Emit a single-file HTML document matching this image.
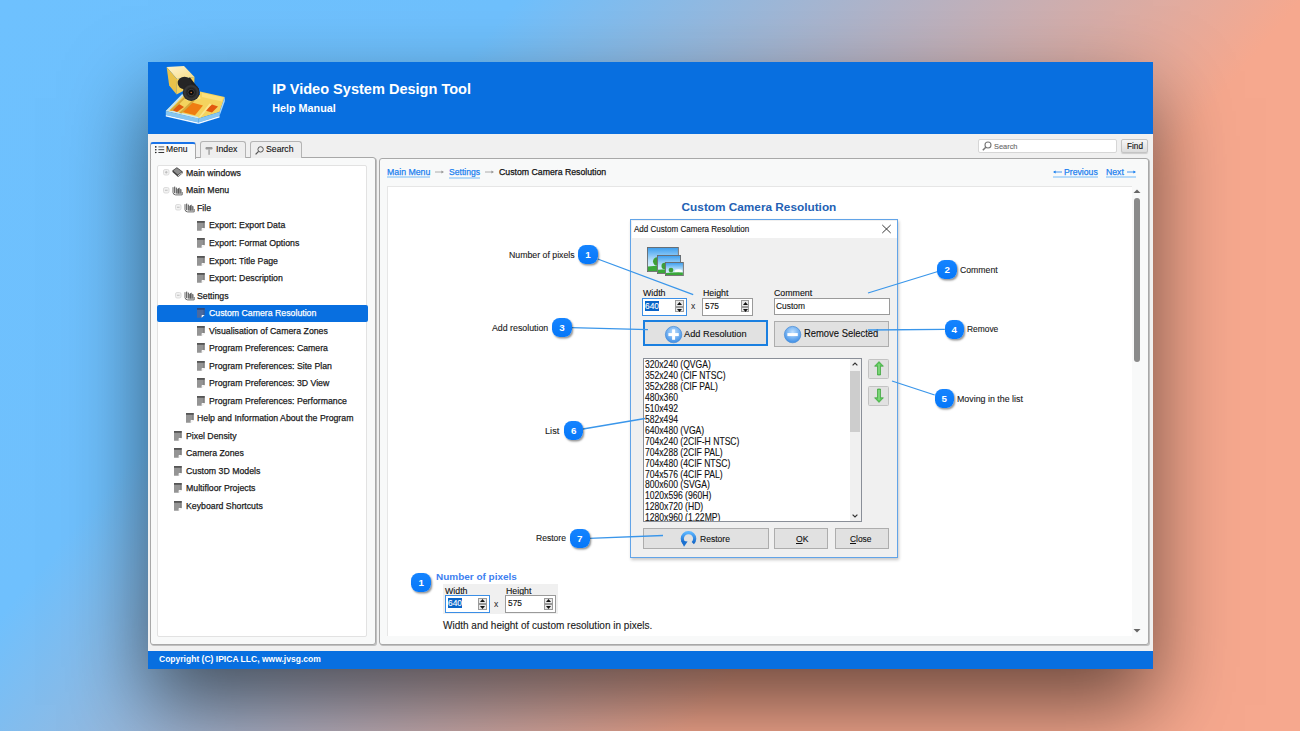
<!DOCTYPE html>
<html><head><meta charset="utf-8"><style>
*{box-sizing:border-box;margin:0;padding:0}
html,body{width:1300px;height:731px;overflow:hidden}
body{position:relative;font-family:"Liberation Sans",sans-serif;
 background:linear-gradient(130deg,#6ec1fe 0%,#6fc0fd 27%,#b3b3c6 47%,#f6a88e 68%,#f6a88e 100%);}
.a{position:absolute}
.t{white-space:nowrap;line-height:1}
svg{position:absolute;overflow:visible}
</style></head><body>
<div class="a" style="left:147.50px;top:62.00px;width:1005.00px;height:607.30px;background:#f0f0f0;box-shadow:0 36px 76px rgba(0,0,0,.56)"></div>
<div class="a" style="left:147.50px;top:62.00px;width:1005.00px;height:72.00px;background:#086fe0"></div>
<div class="a" style="left:147.50px;top:651.20px;width:1005.00px;height:18.00px;background:#086fe0"></div>
<svg style="left:160px;top:62px" width="70" height="64" viewBox="0 0 70 64">
<defs>
<linearGradient id="lg1" x1="0" y1="0" x2="1" y2="1"><stop offset="0" stop-color="#fff4cf"/><stop offset="1" stop-color="#f6dc86"/></linearGradient>
<radialGradient id="lens" cx=".5" cy=".5" r=".55"><stop offset="0" stop-color="#111"/><stop offset=".45" stop-color="#222"/><stop offset=".7" stop-color="#3a3a3a"/><stop offset="1" stop-color="#151515"/></radialGradient>
</defs>
<path d="M5.8 49 L21.9 32.5 L40 33 L40 29.5 L64.7 35 L59.5 50 L38.5 56.5 Z" fill="#f4d35e"/>
<path d="M5.8 49 L38.5 56.5 L38.5 60.5 L5.8 53 Z" fill="#86c6f2"/>
<path d="M5.8 53 L38.5 60.5 L38.5 62 L5.8 54.5 Z" fill="#f4faff"/>
<path d="M38.5 56.5 L59.5 50 L59.5 54 L38.5 60.5 Z" fill="#86c6f2"/>
<path d="M38.5 60.5 L59.5 54 L59.5 55.5 L38.5 62 Z" fill="#f4faff"/>
<path d="M59.5 50 L64.7 35 L64.9 39 L59.5 54 Z" fill="#a6d8fb"/>
<path d="M5.8 49 L21.9 32.5 L23.8 33 L8.3 49.3 Z" fill="#bfe4fc"/>
<path d="M8.3 49.3 L38.5 56.5 L38.5 55 L9.8 48.3 Z" fill="#c9e9fd"/>
<path d="M22 50 L32 40.5 L43 43.5 L35 53.3 Z" fill="#ef7d12"/>
<path d="M11 47.8 L19 42 L24 45 L17 50 Z" fill="#e05c10"/>
<path d="M45 48.5 L52 42.5 L58 44.5 L52 50.5 Z" fill="#e2580e"/>
<path d="M9.5 48.5 L24 35 L26 35.6 L12 49 Z" fill="#d6a93a"/>
<path d="M19 51 L32.5 38.2 L34.5 39 L21.5 51.6 Z" fill="#d6a93a"/>
<path d="M38.5 55.5 L49.5 41.5 L51.5 42.2 L40.5 55.5 Z" fill="#fae68e"/>
<path d="M42 31 L63 35.5 L62 39.5 L42 35 Z" fill="#fbe07a"/>
<path d="M26 36 L40 34 L40.5 37 L27 39 Z" fill="#fbe48a"/>
<path d="M6.6 5 L24 3.9 L34.5 15 L17 17 Z" fill="url(#lg1)"/>
<path d="M6.6 5 L17 17 L16.6 32.4 L9.2 23.4 Z" fill="#e9c24a"/>
<path d="M17 17 L34.5 15 L34.2 23 L16.6 32.4 Z" fill="#f3d15c"/>
<path d="M19.5 19.5 L30 15.5 L39 27 L28 36 Z" fill="#1e1e1e"/>
<ellipse cx="24.5" cy="21" rx="6.8" ry="6.2" fill="#252525"/>
<ellipse cx="31.2" cy="30.5" rx="8.4" ry="8.4" fill="url(#lens)"/>
<circle cx="31.2" cy="30.5" r="3.2" fill="#0c0c0c" stroke="#4a4a4a" stroke-width=".7"/>
<circle cx="31.2" cy="30.5" r=".8" fill="#d07030"/>
</svg>
<div class="a t" style="left:272.20px;top:82.47px;font-size:14.560px;color:#fff;font-weight:bold;">IP Video System Design Tool</div>
<div class="a t" style="left:272.20px;top:103.06px;font-size:10.800px;color:#fff;font-weight:bold;">Help Manual</div>
<div class="a t" style="left:158.50px;top:655.26px;font-size:9.383px;color:#fff;font-weight:bold;transform:scaleX(0.9091);transform-origin:0 0;">Copyright (C) IPICA LLC, www.jvsg.com</div>
<div class="a" style="left:978.30px;top:138.80px;width:138.30px;height:14.20px;background:#fff;border:1px solid #d6d6d6;border-radius:2px"></div>
<svg style="left:982px;top:141px" width="10" height="10" viewBox="0 0 10 10"><circle cx="6" cy="4" r="3" fill="none" stroke="#777" stroke-width="1.1"/><line x1="3.8" y1="6.2" x2="0.8" y2="9.2" stroke="#777" stroke-width="1.5"/></svg>
<div class="a t" style="left:994.20px;top:142.82px;font-size:8.014px;color:#6a6a6a;font-weight:normal;transform:scaleX(0.9259);transform-origin:0 0;-webkit-text-stroke:.12px currentColor;">Search</div>
<div class="a" style="left:1120.60px;top:138.80px;width:27.60px;height:14.20px;background:linear-gradient(#f6f6f6,#dcdcdc);border:1px solid #c4c4c4;border-radius:2px;box-shadow:0 1px 1px rgba(0,0,0,.15)"></div>
<div class="a t" style="left:1127.00px;top:142.29px;font-size:8.878px;color:#111;font-weight:normal;transform:scaleX(0.9259);transform-origin:0 0;-webkit-text-stroke:.12px currentColor;">Find</div>
<div class="a" style="left:149.50px;top:157.40px;width:226.70px;height:487.20px;background:#f8f9f9;border:1px solid #a8a8a8;border-radius:3px;box-shadow:1px 1px 0 #c0c0c0"></div>
<div class="a" style="left:378.50px;top:157.60px;width:770.80px;height:487.40px;background:#f8f9f9;border:1px solid #a8a8a8;border-radius:3px;box-shadow:1px 1px 0 #c0c0c0"></div>
<div class="a" style="left:199.80px;top:141.20px;width:46.70px;height:16.40px;background:#eeeeee;border:1px solid #b4b4b4;border-bottom:none;border-radius:3px 3px 0 0"></div>
<div class="a" style="left:249.70px;top:141.20px;width:52.70px;height:16.40px;background:#eeeeee;border:1px solid #b4b4b4;border-bottom:none;border-radius:3px 3px 0 0"></div>
<div class="a" style="left:149.50px;top:141.70px;width:46.90px;height:16.90px;background:#f8f9f9;border:1px solid #a8a8a8;border-top:2px solid #1a73e8;border-bottom:none;border-radius:3px 3px 0 0"></div>
<svg style="left:154.6px;top:145.9px" width="10" height="8" viewBox="0 0 10 8"><g fill="#111"><circle cx=".8" cy=".9" r=".8"/><circle cx=".8" cy="3.7" r=".8"/><circle cx=".8" cy="6.5" r=".8"/><rect x="3.4" y=".45" width="5.8" height=".9" fill="#555"/><rect x="3.4" y="3.25" width="5.8" height=".9" fill="#333"/><rect x="3.4" y="6.05" width="5.8" height=".9" fill="#222"/></g></svg>
<div class="a t" style="left:166.00px;top:144.38px;font-size:9.707px;color:#111;font-weight:normal;transform:scaleX(0.8850);transform-origin:0 0;-webkit-text-stroke:.12px currentColor;">Menu</div>
<svg style="left:204.6px;top:146px" width="9" height="9" viewBox="0 0 9 9"><path d="M1 1 H7 Q8.6 2.3 7 3.6 H1 Q-.4 2.3 1 1 Z" fill="#9a9a9a"/><rect x="3.5" y="3.6" width="1.1" height="5.2" fill="#8a8a8a"/></svg>
<div class="a t" style="left:216.00px;top:143.93px;font-size:9.887px;color:#111;font-weight:normal;transform:scaleX(0.8850);transform-origin:0 0;-webkit-text-stroke:.12px currentColor;">Index</div>
<svg style="left:254.8px;top:145.5px" width="9" height="9" viewBox="0 0 9 9"><circle cx="5.6" cy="3.4" r="2.7" fill="none" stroke="#555" stroke-width="1"/><line x1="3.6" y1="5.4" x2="0.6" y2="8.4" stroke="#555" stroke-width="1.3"/></svg>
<div class="a t" style="left:265.60px;top:143.97px;font-size:9.842px;color:#111;font-weight:normal;transform:scaleX(0.8850);transform-origin:0 0;-webkit-text-stroke:.12px currentColor;">Search</div>
<div class="a" style="left:157.20px;top:165.40px;width:210.10px;height:471.40px;background:#fff;border:1px solid #e2e2e2;border-radius:2px"></div>
<svg style="left:172.30px;top:167.30px" width="11.5" height="10.5" viewBox="0 0 11.5 10.5"><path d="M.4 3.6 L4.9 .3 L10.6 4.6 L10.9 6.1 L6.1 9.9 L.5 4.9 Z" fill="#3e3e3e"/><path d="M1.2 3.7 L4.9 1 L9.7 4.7 L5.9 7.8 Z" fill="#8e8e8e"/><path d="M5.9 8.5 L10.1 5.2 L10.3 6 L6.1 9.2 Z" fill="#fff"/></svg>
<svg style="left:163.00px;top:169.30px" width="6.5" height="6.5" viewBox="0 0 6.5 6.5"><rect x=".5" y=".5" width="5.5" height="5.5" rx="1.5" fill="#f2f2f2" stroke="#d6d6d6" stroke-width=".8"/><path d="M1.9 3.25H4.6M3.25 1.9V4.6" stroke="#b8b8b8" stroke-width=".9"/></svg>
<div class="a t" style="left:185.60px;top:167.90px;font-size:9.450px;color:#1a1a1a;font-weight:normal;transform:scaleX(0.9259);transform-origin:0 0;-webkit-text-stroke:.25px currentColor;">Main windows</div>
<svg style="left:172.20px;top:185.62px" width="11" height="9.5" viewBox="0 0 11 9.5"><path d="M1 1.2 V6.6 Q1.2 8.8 3.6 8.9 H10.2 V6" fill="none" stroke="#6a6a6a" stroke-width="1"/><path d="M2.7 .6 V7.2 M4.3 1.6 V7.6" stroke="#4a4a4a" stroke-width="1"/><path d="M5.3 3 L7.6 1.6 V7.8 H5.3 Z" fill="#5a5a5a"/><path d="M7.6 2.6 L9.6 3.6 V7.8 H7.6 Z" fill="#7a7a7a"/></svg>
<svg style="left:163.00px;top:186.82px" width="6.5" height="6.5" viewBox="0 0 6.5 6.5"><rect x=".5" y=".5" width="5.5" height="5.5" rx="1.5" fill="#f2f2f2" stroke="#d6d6d6" stroke-width=".8"/><path d="M1.9 3.25H4.6" stroke="#b8b8b8" stroke-width=".9"/></svg>
<div class="a t" style="left:185.60px;top:185.42px;font-size:9.450px;color:#1a1a1a;font-weight:normal;transform:scaleX(0.9259);transform-origin:0 0;-webkit-text-stroke:.25px currentColor;">Main Menu</div>
<svg style="left:183.80px;top:203.14px" width="11" height="9.5" viewBox="0 0 11 9.5"><path d="M1 1.2 V6.6 Q1.2 8.8 3.6 8.9 H10.2 V6" fill="none" stroke="#6a6a6a" stroke-width="1"/><path d="M2.7 .6 V7.2 M4.3 1.6 V7.6" stroke="#4a4a4a" stroke-width="1"/><path d="M5.3 3 L7.6 1.6 V7.8 H5.3 Z" fill="#5a5a5a"/><path d="M7.6 2.6 L9.6 3.6 V7.8 H7.6 Z" fill="#7a7a7a"/></svg>
<svg style="left:174.60px;top:204.34px" width="6.5" height="6.5" viewBox="0 0 6.5 6.5"><rect x=".5" y=".5" width="5.5" height="5.5" rx="1.5" fill="#f2f2f2" stroke="#d6d6d6" stroke-width=".8"/><path d="M1.9 3.25H4.6" stroke="#b8b8b8" stroke-width=".9"/></svg>
<div class="a t" style="left:197.20px;top:202.94px;font-size:9.450px;color:#1a1a1a;font-weight:normal;transform:scaleX(0.9259);transform-origin:0 0;-webkit-text-stroke:.25px currentColor;">File</div>
<svg style="left:197.20px;top:220.66px" width="8" height="10" viewBox="0 0 8 10"><path d="M0 0 H7.6 V7 L4.6 9.8 H0 Z" fill="#949494"/><rect x="0" y="0" width="7.6" height="1.8" fill="#555555"/><rect x="6.6" y="0" width="1" height="7" fill="#555555" opacity=".6"/><path d="M7.6 7 L4.6 9.8 V7.6 Q4.8 7 5.4 7 Z" fill="#fff"/></svg>
<div class="a t" style="left:208.80px;top:220.46px;font-size:9.450px;color:#1a1a1a;font-weight:normal;transform:scaleX(0.9259);transform-origin:0 0;-webkit-text-stroke:.25px currentColor;">Export: Export Data</div>
<svg style="left:197.20px;top:238.18px" width="8" height="10" viewBox="0 0 8 10"><path d="M0 0 H7.6 V7 L4.6 9.8 H0 Z" fill="#949494"/><rect x="0" y="0" width="7.6" height="1.8" fill="#555555"/><rect x="6.6" y="0" width="1" height="7" fill="#555555" opacity=".6"/><path d="M7.6 7 L4.6 9.8 V7.6 Q4.8 7 5.4 7 Z" fill="#fff"/></svg>
<div class="a t" style="left:208.80px;top:237.98px;font-size:9.450px;color:#1a1a1a;font-weight:normal;transform:scaleX(0.9259);transform-origin:0 0;-webkit-text-stroke:.25px currentColor;">Export: Format Options</div>
<svg style="left:197.20px;top:255.70px" width="8" height="10" viewBox="0 0 8 10"><path d="M0 0 H7.6 V7 L4.6 9.8 H0 Z" fill="#949494"/><rect x="0" y="0" width="7.6" height="1.8" fill="#555555"/><rect x="6.6" y="0" width="1" height="7" fill="#555555" opacity=".6"/><path d="M7.6 7 L4.6 9.8 V7.6 Q4.8 7 5.4 7 Z" fill="#fff"/></svg>
<div class="a t" style="left:208.80px;top:255.50px;font-size:9.450px;color:#1a1a1a;font-weight:normal;transform:scaleX(0.9259);transform-origin:0 0;-webkit-text-stroke:.25px currentColor;">Export: Title Page</div>
<svg style="left:197.20px;top:273.22px" width="8" height="10" viewBox="0 0 8 10"><path d="M0 0 H7.6 V7 L4.6 9.8 H0 Z" fill="#949494"/><rect x="0" y="0" width="7.6" height="1.8" fill="#555555"/><rect x="6.6" y="0" width="1" height="7" fill="#555555" opacity=".6"/><path d="M7.6 7 L4.6 9.8 V7.6 Q4.8 7 5.4 7 Z" fill="#fff"/></svg>
<div class="a t" style="left:208.80px;top:273.02px;font-size:9.450px;color:#1a1a1a;font-weight:normal;transform:scaleX(0.9259);transform-origin:0 0;-webkit-text-stroke:.25px currentColor;">Export: Description</div>
<svg style="left:183.80px;top:290.74px" width="11" height="9.5" viewBox="0 0 11 9.5"><path d="M1 1.2 V6.6 Q1.2 8.8 3.6 8.9 H10.2 V6" fill="none" stroke="#6a6a6a" stroke-width="1"/><path d="M2.7 .6 V7.2 M4.3 1.6 V7.6" stroke="#4a4a4a" stroke-width="1"/><path d="M5.3 3 L7.6 1.6 V7.8 H5.3 Z" fill="#5a5a5a"/><path d="M7.6 2.6 L9.6 3.6 V7.8 H7.6 Z" fill="#7a7a7a"/></svg>
<svg style="left:174.60px;top:291.94px" width="6.5" height="6.5" viewBox="0 0 6.5 6.5"><rect x=".5" y=".5" width="5.5" height="5.5" rx="1.5" fill="#f2f2f2" stroke="#d6d6d6" stroke-width=".8"/><path d="M1.9 3.25H4.6" stroke="#b8b8b8" stroke-width=".9"/></svg>
<div class="a t" style="left:197.20px;top:290.54px;font-size:9.450px;color:#1a1a1a;font-weight:normal;transform:scaleX(0.9259);transform-origin:0 0;-webkit-text-stroke:.25px currentColor;">Settings</div>
<div class="a" style="left:157.40px;top:304.50px;width:210.40px;height:17.80px;background:#086fe0;border-radius:2px"></div>
<svg style="left:197.20px;top:308.26px" width="8" height="10" viewBox="0 0 8 10"><path d="M0 0 H7.6 V7 L4.6 9.8 H0 Z" fill="#4a6aa0"/><rect x="0" y="0" width="7.6" height="1.8" fill="#2c4a80"/><rect x="6.6" y="0" width="1" height="7" fill="#2c4a80" opacity=".6"/><path d="M7.6 7 L4.6 9.8 V7.6 Q4.8 7 5.4 7 Z" fill="#fff"/></svg>
<div class="a t" style="left:208.80px;top:308.06px;font-size:9.450px;color:#fff;font-weight:normal;transform:scaleX(0.9259);transform-origin:0 0;-webkit-text-stroke:.25px currentColor;">Custom Camera Resolution</div>
<svg style="left:197.20px;top:325.78px" width="8" height="10" viewBox="0 0 8 10"><path d="M0 0 H7.6 V7 L4.6 9.8 H0 Z" fill="#949494"/><rect x="0" y="0" width="7.6" height="1.8" fill="#555555"/><rect x="6.6" y="0" width="1" height="7" fill="#555555" opacity=".6"/><path d="M7.6 7 L4.6 9.8 V7.6 Q4.8 7 5.4 7 Z" fill="#fff"/></svg>
<div class="a t" style="left:208.80px;top:325.58px;font-size:9.450px;color:#1a1a1a;font-weight:normal;transform:scaleX(0.9259);transform-origin:0 0;-webkit-text-stroke:.25px currentColor;">Visualisation of Camera Zones</div>
<svg style="left:197.20px;top:343.30px" width="8" height="10" viewBox="0 0 8 10"><path d="M0 0 H7.6 V7 L4.6 9.8 H0 Z" fill="#949494"/><rect x="0" y="0" width="7.6" height="1.8" fill="#555555"/><rect x="6.6" y="0" width="1" height="7" fill="#555555" opacity=".6"/><path d="M7.6 7 L4.6 9.8 V7.6 Q4.8 7 5.4 7 Z" fill="#fff"/></svg>
<div class="a t" style="left:208.80px;top:343.10px;font-size:9.450px;color:#1a1a1a;font-weight:normal;transform:scaleX(0.9259);transform-origin:0 0;-webkit-text-stroke:.25px currentColor;">Program Preferences: Camera</div>
<svg style="left:197.20px;top:360.82px" width="8" height="10" viewBox="0 0 8 10"><path d="M0 0 H7.6 V7 L4.6 9.8 H0 Z" fill="#949494"/><rect x="0" y="0" width="7.6" height="1.8" fill="#555555"/><rect x="6.6" y="0" width="1" height="7" fill="#555555" opacity=".6"/><path d="M7.6 7 L4.6 9.8 V7.6 Q4.8 7 5.4 7 Z" fill="#fff"/></svg>
<div class="a t" style="left:208.80px;top:360.62px;font-size:9.450px;color:#1a1a1a;font-weight:normal;transform:scaleX(0.9259);transform-origin:0 0;-webkit-text-stroke:.25px currentColor;">Program Preferences: Site Plan</div>
<svg style="left:197.20px;top:378.34px" width="8" height="10" viewBox="0 0 8 10"><path d="M0 0 H7.6 V7 L4.6 9.8 H0 Z" fill="#949494"/><rect x="0" y="0" width="7.6" height="1.8" fill="#555555"/><rect x="6.6" y="0" width="1" height="7" fill="#555555" opacity=".6"/><path d="M7.6 7 L4.6 9.8 V7.6 Q4.8 7 5.4 7 Z" fill="#fff"/></svg>
<div class="a t" style="left:208.80px;top:378.14px;font-size:9.450px;color:#1a1a1a;font-weight:normal;transform:scaleX(0.9259);transform-origin:0 0;-webkit-text-stroke:.25px currentColor;">Program Preferences: 3D View</div>
<svg style="left:197.20px;top:395.86px" width="8" height="10" viewBox="0 0 8 10"><path d="M0 0 H7.6 V7 L4.6 9.8 H0 Z" fill="#949494"/><rect x="0" y="0" width="7.6" height="1.8" fill="#555555"/><rect x="6.6" y="0" width="1" height="7" fill="#555555" opacity=".6"/><path d="M7.6 7 L4.6 9.8 V7.6 Q4.8 7 5.4 7 Z" fill="#fff"/></svg>
<div class="a t" style="left:208.80px;top:395.66px;font-size:9.450px;color:#1a1a1a;font-weight:normal;transform:scaleX(0.9259);transform-origin:0 0;-webkit-text-stroke:.25px currentColor;">Program Preferences: Performance</div>
<svg style="left:185.60px;top:413.38px" width="8" height="10" viewBox="0 0 8 10"><path d="M0 0 H7.6 V7 L4.6 9.8 H0 Z" fill="#949494"/><rect x="0" y="0" width="7.6" height="1.8" fill="#555555"/><rect x="6.6" y="0" width="1" height="7" fill="#555555" opacity=".6"/><path d="M7.6 7 L4.6 9.8 V7.6 Q4.8 7 5.4 7 Z" fill="#fff"/></svg>
<div class="a t" style="left:197.20px;top:413.18px;font-size:9.450px;color:#1a1a1a;font-weight:normal;transform:scaleX(0.9259);transform-origin:0 0;-webkit-text-stroke:.25px currentColor;">Help and Information About the Program</div>
<svg style="left:174.00px;top:430.90px" width="8" height="10" viewBox="0 0 8 10"><path d="M0 0 H7.6 V7 L4.6 9.8 H0 Z" fill="#949494"/><rect x="0" y="0" width="7.6" height="1.8" fill="#555555"/><rect x="6.6" y="0" width="1" height="7" fill="#555555" opacity=".6"/><path d="M7.6 7 L4.6 9.8 V7.6 Q4.8 7 5.4 7 Z" fill="#fff"/></svg>
<div class="a t" style="left:185.60px;top:430.70px;font-size:9.450px;color:#1a1a1a;font-weight:normal;transform:scaleX(0.9259);transform-origin:0 0;-webkit-text-stroke:.25px currentColor;">Pixel Density</div>
<svg style="left:174.00px;top:448.42px" width="8" height="10" viewBox="0 0 8 10"><path d="M0 0 H7.6 V7 L4.6 9.8 H0 Z" fill="#949494"/><rect x="0" y="0" width="7.6" height="1.8" fill="#555555"/><rect x="6.6" y="0" width="1" height="7" fill="#555555" opacity=".6"/><path d="M7.6 7 L4.6 9.8 V7.6 Q4.8 7 5.4 7 Z" fill="#fff"/></svg>
<div class="a t" style="left:185.60px;top:448.22px;font-size:9.450px;color:#1a1a1a;font-weight:normal;transform:scaleX(0.9259);transform-origin:0 0;-webkit-text-stroke:.25px currentColor;">Camera Zones</div>
<svg style="left:174.00px;top:465.94px" width="8" height="10" viewBox="0 0 8 10"><path d="M0 0 H7.6 V7 L4.6 9.8 H0 Z" fill="#949494"/><rect x="0" y="0" width="7.6" height="1.8" fill="#555555"/><rect x="6.6" y="0" width="1" height="7" fill="#555555" opacity=".6"/><path d="M7.6 7 L4.6 9.8 V7.6 Q4.8 7 5.4 7 Z" fill="#fff"/></svg>
<div class="a t" style="left:185.60px;top:465.74px;font-size:9.450px;color:#1a1a1a;font-weight:normal;transform:scaleX(0.9259);transform-origin:0 0;-webkit-text-stroke:.25px currentColor;">Custom 3D Models</div>
<svg style="left:174.00px;top:483.46px" width="8" height="10" viewBox="0 0 8 10"><path d="M0 0 H7.6 V7 L4.6 9.8 H0 Z" fill="#949494"/><rect x="0" y="0" width="7.6" height="1.8" fill="#555555"/><rect x="6.6" y="0" width="1" height="7" fill="#555555" opacity=".6"/><path d="M7.6 7 L4.6 9.8 V7.6 Q4.8 7 5.4 7 Z" fill="#fff"/></svg>
<div class="a t" style="left:185.60px;top:483.26px;font-size:9.450px;color:#1a1a1a;font-weight:normal;transform:scaleX(0.9259);transform-origin:0 0;-webkit-text-stroke:.25px currentColor;">Multifloor Projects</div>
<svg style="left:174.00px;top:500.98px" width="8" height="10" viewBox="0 0 8 10"><path d="M0 0 H7.6 V7 L4.6 9.8 H0 Z" fill="#949494"/><rect x="0" y="0" width="7.6" height="1.8" fill="#555555"/><rect x="6.6" y="0" width="1" height="7" fill="#555555" opacity=".6"/><path d="M7.6 7 L4.6 9.8 V7.6 Q4.8 7 5.4 7 Z" fill="#fff"/></svg>
<div class="a t" style="left:185.60px;top:500.78px;font-size:9.450px;color:#1a1a1a;font-weight:normal;transform:scaleX(0.9259);transform-origin:0 0;-webkit-text-stroke:.25px currentColor;">Keyboard Shortcuts</div>
<div class="a t" style="left:386.60px;top:166.88px;font-size:9.472px;color:#1a80f0;font-weight:normal;transform:scaleX(0.9259);transform-origin:0 0;-webkit-text-stroke:.25px currentColor;">Main Menu</div>
<div class="a" style="left:386.60px;top:176.30px;width:43.40px;height:1.90px;background:#b6daf9"></div>
<svg style="left:435.30px;top:168.80px" width="9" height="6" viewBox="0 0 9 6"><path d="M0 3 H8" stroke="#999" stroke-width=".8"/><path d="M9 3 L6.4 1.6 V4.4 Z" fill="#999"/></svg>
<div class="a t" style="left:448.50px;top:167.53px;font-size:9.299px;color:#1a80f0;font-weight:normal;transform:scaleX(0.9259);transform-origin:0 0;-webkit-text-stroke:.25px currentColor;">Settings</div>
<div class="a" style="left:448.50px;top:176.80px;width:31.10px;height:1.90px;background:#b6daf9"></div>
<svg style="left:485.00px;top:168.80px" width="9" height="6" viewBox="0 0 9 6"><path d="M0 3 H8" stroke="#999" stroke-width=".8"/><path d="M9 3 L6.4 1.6 V4.4 Z" fill="#999"/></svg>
<div class="a t" style="left:498.50px;top:166.91px;font-size:9.439px;color:#111;font-weight:normal;transform:scaleX(0.9259);transform-origin:0 0;-webkit-text-stroke:.25px currentColor;">Custom Camera Resolution</div>
<svg style="left:1053.00px;top:168.80px" width="9" height="6" viewBox="0 0 9 6"><path d="M9 3 H1" stroke="#1a80f0" stroke-width=".8"/><path d="M0 3 L2.6 1.6 V4.4 Z" fill="#1a80f0"/></svg>
<div class="a t" style="left:1063.80px;top:166.95px;font-size:9.396px;color:#1a80f0;font-weight:normal;transform:scaleX(0.9259);transform-origin:0 0;-webkit-text-stroke:.25px currentColor;">Previous</div>
<div class="a" style="left:1053.00px;top:176.30px;width:44.80px;height:1.90px;background:#b6daf9"></div>
<div class="a t" style="left:1106.20px;top:166.95px;font-size:9.396px;color:#1a80f0;font-weight:normal;transform:scaleX(0.9259);transform-origin:0 0;-webkit-text-stroke:.25px currentColor;">Next</div>
<svg style="left:1127.00px;top:168.80px" width="9" height="6" viewBox="0 0 9 6"><path d="M0 3 H8" stroke="#1a80f0" stroke-width=".8"/><path d="M9 3 L6.4 1.6 V4.4 Z" fill="#1a80f0"/></svg>
<div class="a" style="left:1106.20px;top:176.30px;width:29.80px;height:1.90px;background:#b6daf9"></div>
<div class="a" style="left:386.60px;top:185.80px;width:745.40px;height:450.70px;background:#fff;border-top:1px solid #e6e6e6;border-left:1px solid #e6e6e6"></div>
<svg style="left:1133px;top:188px" width="8" height="6" viewBox="0 0 8 6"><path d="M0.5 5 L4 1.5 L7.5 5 Z" fill="#666"/></svg>
<div class="a" style="left:1134.00px;top:198.00px;width:6.00px;height:164.00px;background:#8a8a8a;border-radius:3px"></div>
<svg style="left:1133px;top:628px" width="8" height="6" viewBox="0 0 8 6"><path d="M0.5 1 L4 4.5 L7.5 1 Z" fill="#666"/></svg>
<div class="a t" style="left:681.60px;top:201.61px;font-size:11.800px;color:#2361b4;font-weight:bold;">Custom Camera Resolution</div>
<div class="a" style="left:630.30px;top:219.10px;width:267.90px;height:338.50px;background:#f0f0f0;border:1.6px solid #62a4e8;box-shadow:1px 2px 3px rgba(0,0,0,.22)"></div>
<div class="a" style="left:631.90px;top:220.70px;width:264.70px;height:17.30px;background:#fff"></div>
<div class="a t" style="left:634.00px;top:224.57px;font-size:9.016px;color:#111;font-weight:normal;transform:scaleX(0.8929);transform-origin:0 0;-webkit-text-stroke:.12px currentColor;">Add Custom Camera Resolution</div>
<svg style="left:882.3px;top:224.9px" width="9" height="8" viewBox="0 0 9 8"><path d="M0.3 0 L8.7 8 M8.7 0 L0.3 8" stroke="#222" stroke-width=".9"/></svg>
<svg width="0" height="0" style="position:absolute"><defs><linearGradient id="sky" x1="0" y1="0" x2="0" y2="1"><stop offset="0" stop-color="#3f9fee"/><stop offset=".55" stop-color="#b9e1fb"/><stop offset="1" stop-color="#eef8fd"/></linearGradient></defs></svg>
<svg style="left:646.90px;top:247.20px" width="31.8" height="25" viewBox="0 0 31.8 25"><rect x="0" y="0" width="31.8" height="25" fill="#6a6a6a"/><rect x=".9" y=".9" width="30.0" height="23.2" fill="url(#sky)"/><ellipse cx="22.9" cy="16.5" rx="6.4" ry="3.5" fill="#fff" opacity=".9"/><path d="M.9 19.5 Q15.9 18.0 30.900000000000002 18.5 V24.1 H.9 Z" fill="#3aa83a"/><circle cx="10.2" cy="14.5" r="4.2" fill="#3e9e38"/></svg>
<svg style="left:657.10px;top:254.50px" width="24" height="19" viewBox="0 0 24 19"><rect x="0" y="0" width="24" height="19" fill="#6a6a6a"/><rect x=".9" y=".9" width="22.2" height="17.2" fill="url(#sky)"/><ellipse cx="17.3" cy="12.5" rx="4.8" ry="2.7" fill="#fff" opacity=".9"/><path d="M.9 14.8 Q12.0 13.7 23.1 14.1 V18.1 H.9 Z" fill="#3aa83a"/><circle cx="7.7" cy="11.0" r="3.2" fill="#3e9e38"/></svg>
<svg style="left:665.10px;top:261.50px" width="18.8" height="14" viewBox="0 0 18.8 14"><rect x="0" y="0" width="18.8" height="14" fill="#6a6a6a"/><rect x=".9" y=".9" width="17.0" height="12.2" fill="url(#sky)"/><ellipse cx="13.5" cy="9.2" rx="3.8" ry="2.0" fill="#fff" opacity=".9"/><path d="M.9 10.9 Q9.4 10.1 17.900000000000002 10.4 V13.1 H.9 Z" fill="#3aa83a"/><circle cx="6.0" cy="8.1" r="2.4" fill="#3e9e38"/></svg>
<div class="a t" style="left:642.70px;top:287.85px;font-size:9.504px;color:#111;font-weight:normal;transform:scaleX(0.9259);transform-origin:0 0;-webkit-text-stroke:.12px currentColor;">Width</div>
<div class="a t" style="left:703.00px;top:287.85px;font-size:9.504px;color:#111;font-weight:normal;transform:scaleX(0.9259);transform-origin:0 0;-webkit-text-stroke:.12px currentColor;">Height</div>
<div class="a t" style="left:774.00px;top:287.85px;font-size:9.504px;color:#111;font-weight:normal;transform:scaleX(0.9259);transform-origin:0 0;-webkit-text-stroke:.12px currentColor;">Comment</div>
<div class="a" style="left:642.00px;top:297.70px;width:45.00px;height:17.90px;background:#fff;border:1px solid #3a8ee6"></div>
<div class="a" style="left:644.50px;top:300.80px;width:14.20px;height:9.90px;background:#0a64c8"></div>
<div class="a t" style="left:644.60px;top:301.62px;font-size:9.072px;color:#fff;font-weight:normal;transform:scaleX(0.9259);transform-origin:0 0;-webkit-text-stroke:.12px currentColor;">640</div>
<div class="a" style="left:675.30px;top:300.20px;width:8.60px;height:6.50px;background:#e8e8e8;border:1px solid #9a9a9a"></div>
<div class="a" style="left:675.30px;top:306.70px;width:8.60px;height:5.80px;background:#e8e8e8;border:1px solid #9a9a9a"></div>
<svg style="left:677.10px;top:302.00px" width="5" height="3" viewBox="0 0 5 3"><path d="M0 3 L2.5 0 L5 3Z" fill="#111"/></svg>
<svg style="left:677.10px;top:308.50px" width="5" height="3" viewBox="0 0 5 3"><path d="M0 0 L2.5 3 L5 0Z" fill="#111"/></svg>
<div class="a t" style="left:691.00px;top:302.34px;font-size:9.288px;color:#222;font-weight:normal;transform:scaleX(0.9259);transform-origin:0 0;-webkit-text-stroke:0">x</div>
<div class="a" style="left:702.40px;top:297.70px;width:50.20px;height:17.90px;background:#fff;border:1px solid #9a9a9a"></div>
<div class="a t" style="left:705.00px;top:301.62px;font-size:9.072px;color:#111;font-weight:normal;transform:scaleX(0.9259);transform-origin:0 0;-webkit-text-stroke:.12px currentColor;">575</div>
<div class="a" style="left:740.90px;top:300.20px;width:8.60px;height:6.50px;background:#e8e8e8;border:1px solid #9a9a9a"></div>
<div class="a" style="left:740.90px;top:306.70px;width:8.60px;height:5.80px;background:#e8e8e8;border:1px solid #9a9a9a"></div>
<svg style="left:742.70px;top:302.00px" width="5" height="3" viewBox="0 0 5 3"><path d="M0 3 L2.5 0 L5 3Z" fill="#111"/></svg>
<svg style="left:742.70px;top:308.50px" width="5" height="3" viewBox="0 0 5 3"><path d="M0 0 L2.5 3 L5 0Z" fill="#111"/></svg>
<div class="a" style="left:774.00px;top:297.60px;width:115.80px;height:17.00px;background:#fff;border:1px solid #9a9a9a"></div>
<div class="a t" style="left:776.00px;top:301.52px;font-size:9.072px;color:#111;font-weight:normal;transform:scaleX(0.9259);transform-origin:0 0;-webkit-text-stroke:.12px currentColor;">Custom</div>
<div class="a" style="left:643.30px;top:320.20px;width:124.80px;height:26.10px;background:#e1e1e1;border:2px solid #1a7fe0"></div>
<div class="a" style="left:774.20px;top:320.70px;width:114.80px;height:26.30px;background:#e1e1e1;border:1px solid #adadad"></div>
<svg style="left:664.90px;top:325.60px" width="17.2" height="17.2" viewBox="-8.6 -8.6 17.2 17.2"><defs><radialGradient id="rg673" cx=".5" cy=".35" r=".65"><stop offset="0" stop-color="#bfe0ff"/><stop offset="1" stop-color="#3d8ee6"/></radialGradient></defs><circle r="8.2" fill="url(#rg673)" stroke="#4c8fd8" stroke-width=".8"/><rect x="-5.2" y="-1.5" width="10.4" height="3" fill="#fff"/><rect x="-1.5" y="-5.2" width="3" height="10.4" fill="#fff"/></svg>
<div class="a t" style="left:684.00px;top:328.95px;font-size:9.979px;color:#111;font-weight:normal;transform:scaleX(0.9259);transform-origin:0 0;-webkit-text-stroke:.12px currentColor;">Add Resolution</div>
<svg style="left:784.00px;top:325.60px" width="17.2" height="17.2" viewBox="-8.6 -8.6 17.2 17.2"><defs><radialGradient id="rg792" cx=".5" cy=".35" r=".65"><stop offset="0" stop-color="#bfe0ff"/><stop offset="1" stop-color="#3d8ee6"/></radialGradient></defs><circle r="8.2" fill="url(#rg792)" stroke="#4c8fd8" stroke-width=".8"/><rect x="-5.2" y="-1.5" width="10.4" height="3" fill="#fff"/></svg>
<div class="a t" style="left:803.70px;top:328.80px;font-size:10.163px;color:#111;font-weight:normal;transform:scaleX(0.9259);transform-origin:0 0;-webkit-text-stroke:.12px currentColor;">Remove Selected</div>
<div class="a" style="left:642.60px;top:358.30px;width:219.60px;height:164.10px;background:#fff;border:1px solid #8a8f98"></div>
<div class="a" style="left:644px;top:359px;width:206px;height:162.4px;overflow:hidden">
<div class="a t" style="left:1.3px;top:1.11px;font-size:10.148px;color:#111;transform:scaleX(0.8475);transform-origin:0 0;-webkit-text-stroke:.12px currentColor;">320x240 (QVGA)</div>
<div class="a t" style="left:1.3px;top:12.05px;font-size:10.148px;color:#111;transform:scaleX(0.8475);transform-origin:0 0;-webkit-text-stroke:.12px currentColor;">352x240 (CIF NTSC)</div>
<div class="a t" style="left:1.3px;top:22.99px;font-size:10.148px;color:#111;transform:scaleX(0.8475);transform-origin:0 0;-webkit-text-stroke:.12px currentColor;">352x288 (CIF PAL)</div>
<div class="a t" style="left:1.3px;top:33.93px;font-size:10.148px;color:#111;transform:scaleX(0.8475);transform-origin:0 0;-webkit-text-stroke:.12px currentColor;">480x360</div>
<div class="a t" style="left:1.3px;top:44.87px;font-size:10.148px;color:#111;transform:scaleX(0.8475);transform-origin:0 0;-webkit-text-stroke:.12px currentColor;">510x492</div>
<div class="a t" style="left:1.3px;top:55.81px;font-size:10.148px;color:#111;transform:scaleX(0.8475);transform-origin:0 0;-webkit-text-stroke:.12px currentColor;">582x494</div>
<div class="a t" style="left:1.3px;top:66.75px;font-size:10.148px;color:#111;transform:scaleX(0.8475);transform-origin:0 0;-webkit-text-stroke:.12px currentColor;">640x480 (VGA)</div>
<div class="a t" style="left:1.3px;top:77.69px;font-size:10.148px;color:#111;transform:scaleX(0.8475);transform-origin:0 0;-webkit-text-stroke:.12px currentColor;">704x240 (2CIF-H NTSC)</div>
<div class="a t" style="left:1.3px;top:88.63px;font-size:10.148px;color:#111;transform:scaleX(0.8475);transform-origin:0 0;-webkit-text-stroke:.12px currentColor;">704x288 (2CIF PAL)</div>
<div class="a t" style="left:1.3px;top:99.57px;font-size:10.148px;color:#111;transform:scaleX(0.8475);transform-origin:0 0;-webkit-text-stroke:.12px currentColor;">704x480 (4CIF NTSC)</div>
<div class="a t" style="left:1.3px;top:110.51px;font-size:10.148px;color:#111;transform:scaleX(0.8475);transform-origin:0 0;-webkit-text-stroke:.12px currentColor;">704x576 (4CIF PAL)</div>
<div class="a t" style="left:1.3px;top:121.45px;font-size:10.148px;color:#111;transform:scaleX(0.8475);transform-origin:0 0;-webkit-text-stroke:.12px currentColor;">800x600 (SVGA)</div>
<div class="a t" style="left:1.3px;top:132.39px;font-size:10.148px;color:#111;transform:scaleX(0.8475);transform-origin:0 0;-webkit-text-stroke:.12px currentColor;">1020x596 (960H)</div>
<div class="a t" style="left:1.3px;top:143.33px;font-size:10.148px;color:#111;transform:scaleX(0.8475);transform-origin:0 0;-webkit-text-stroke:.12px currentColor;">1280x720 (HD)</div>
<div class="a t" style="left:1.3px;top:154.27px;font-size:10.148px;color:#111;transform:scaleX(0.8475);transform-origin:0 0;-webkit-text-stroke:.12px currentColor;">1280x960 (1.22MP)</div>
</div>
<div class="a" style="left:850.00px;top:359.00px;width:11.20px;height:162.40px;background:#f0f0f0"></div>
<div class="a" style="left:850.40px;top:370.70px;width:9.40px;height:61.20px;background:#cdcdcd"></div>
<svg style="left:852px;top:362.3px" width="6" height="4" viewBox="0 0 6 4"><path d="M0.6 3.4 L3 1 L5.4 3.4" fill="none" stroke="#333" stroke-width="1.2"/></svg>
<svg style="left:852px;top:513.5px" width="6" height="4" viewBox="0 0 6 4"><path d="M0.6 0.6 L3 3 L5.4 0.6" fill="none" stroke="#333" stroke-width="1.2"/></svg>
<div class="a" style="left:868.40px;top:358.60px;width:20.40px;height:20.10px;background:#e1e1e1;border:1px solid #c2c2c2;border-radius:1.5px"></div>
<div class="a" style="left:868.40px;top:385.90px;width:20.40px;height:20.10px;background:#e1e1e1;border:1px solid #c2c2c2;border-radius:1.5px"></div>
<svg style="left:873.5px;top:361px" width="10" height="15" viewBox="0 0 10 15"><path d="M5 .6 L9.4 5.2 H6.5 V14 H3.5 V5.2 H.6 Z" fill="#5cc85a" stroke="#3aa23a" stroke-width=".7" stroke-linejoin="round"/><path d="M5 3 V13" stroke="#a6e6a0" stroke-width=".8"/></svg>
<svg style="left:873.5px;top:388.3px" width="10" height="15" viewBox="0 0 10 15"><path d="M5 14.4 L9.4 9.8 H6.5 V1 H3.5 V9.8 H.6 Z" fill="#5cc85a" stroke="#3aa23a" stroke-width=".7" stroke-linejoin="round"/><path d="M5 2 V12" stroke="#a6e6a0" stroke-width=".8"/></svg>
<div class="a" style="left:643.00px;top:528.20px;width:125.60px;height:20.90px;background:#e1e1e1;border:1px solid #adadad"></div>
<div class="a" style="left:774.30px;top:528.20px;width:54.00px;height:20.90px;background:#e1e1e1;border:1px solid #adadad"></div>
<div class="a" style="left:834.70px;top:528.20px;width:54.00px;height:20.90px;background:#e1e1e1;border:1px solid #adadad"></div>
<svg style="left:679.5px;top:530.3px" width="17" height="17" viewBox="0 0 17 17"><defs><linearGradient id="rsg" x1="0" y1="0" x2="0" y2="1"><stop offset="0" stop-color="#5ab4ff"/><stop offset="1" stop-color="#1466c8"/></linearGradient></defs><path d="M4.2 13.2 A6.2 6.2 0 1 1 12.8 13.2" fill="none" stroke="url(#rsg)" stroke-width="3.2"/><path d="M1.2 10.8 L7.6 11.4 L4 16.8 Z" fill="#1a70d0"/></svg>
<div class="a t" style="left:699.50px;top:535.27px;font-size:9.256px;color:#111;font-weight:normal;transform:scaleX(0.9259);transform-origin:0 0;-webkit-text-stroke:.12px currentColor;">Restore</div>
<div class="a t" style="left:795.60px;top:535.24px;font-size:9.288px;color:#111;font-weight:normal;transform:scaleX(0.9259);transform-origin:0 0;-webkit-text-stroke:.12px currentColor;"><u>O</u>K</div>
<div class="a t" style="left:849.60px;top:535.42px;font-size:9.072px;color:#111;font-weight:normal;transform:scaleX(0.9259);transform-origin:0 0;-webkit-text-stroke:.12px currentColor;"><u>C</u>lose</div>
<svg style="left:0;top:0" width="1300" height="731" viewBox="0 0 1300 731"><line x1="597.7" y1="259" x2="693.2" y2="294.7" stroke="#3a96ea" stroke-width="1.3"/></svg>
<svg style="left:0;top:0" width="1300" height="731" viewBox="0 0 1300 731"><line x1="937.9" y1="271.5" x2="868" y2="293" stroke="#3a96ea" stroke-width="1.3"/></svg>
<svg style="left:0;top:0" width="1300" height="731" viewBox="0 0 1300 731"><line x1="571" y1="327.6" x2="648" y2="329.6" stroke="#3a96ea" stroke-width="1.3"/></svg>
<svg style="left:0;top:0" width="1300" height="731" viewBox="0 0 1300 731"><line x1="944.8" y1="329.4" x2="868" y2="330" stroke="#3a96ea" stroke-width="1.3"/></svg>
<svg style="left:0;top:0" width="1300" height="731" viewBox="0 0 1300 731"><line x1="934.7" y1="395" x2="892" y2="381" stroke="#3a96ea" stroke-width="1.3"/></svg>
<svg style="left:0;top:0" width="1300" height="731" viewBox="0 0 1300 731"><line x1="583" y1="429" x2="645" y2="418.5" stroke="#3a96ea" stroke-width="1.3"/></svg>
<svg style="left:0;top:0" width="1300" height="731" viewBox="0 0 1300 731"><line x1="589" y1="538.4" x2="663" y2="535.5" stroke="#3a96ea" stroke-width="1.3"/></svg>
<div class="a" style="left:578.20px;top:245.00px;width:19.6px;height:19.4px;border-radius:7.5px;background:linear-gradient(#1584ff,#0677f8);box-shadow:1.2px 1.5px 2px rgba(0,0,0,.42)"></div>
<div class="a t" style="left:585.20px;top:249.90px;font-size:9.800px;color:#fff;font-weight:bold;">1</div>
<div class="a t" style="left:508.50px;top:250.19px;font-size:9.461px;color:#1a1a1a;font-weight:normal;transform:scaleX(0.9259);transform-origin:0 0;-webkit-text-stroke:.12px currentColor;">Number of pixels</div>
<div class="a" style="left:937.40px;top:259.60px;width:19.6px;height:19.4px;border-radius:7.5px;background:linear-gradient(#1584ff,#0677f8);box-shadow:1.2px 1.5px 2px rgba(0,0,0,.42)"></div>
<div class="a t" style="left:944.40px;top:264.50px;font-size:9.800px;color:#fff;font-weight:bold;">2</div>
<div class="a t" style="left:960.00px;top:264.85px;font-size:9.396px;color:#1a1a1a;font-weight:normal;transform:scaleX(0.9259);transform-origin:0 0;-webkit-text-stroke:.12px currentColor;">Comment</div>
<div class="a" style="left:552.20px;top:317.80px;width:19.6px;height:19.4px;border-radius:7.5px;background:linear-gradient(#1584ff,#0677f8);box-shadow:1.2px 1.5px 2px rgba(0,0,0,.42)"></div>
<div class="a t" style="left:559.20px;top:322.70px;font-size:9.800px;color:#fff;font-weight:bold;">3</div>
<div class="a t" style="left:492.00px;top:322.95px;font-size:9.515px;color:#1a1a1a;font-weight:normal;transform:scaleX(0.9259);transform-origin:0 0;-webkit-text-stroke:.12px currentColor;">Add resolution</div>
<div class="a" style="left:944.50px;top:319.70px;width:19.6px;height:19.4px;border-radius:7.5px;background:linear-gradient(#1584ff,#0677f8);box-shadow:1.2px 1.5px 2px rgba(0,0,0,.42)"></div>
<div class="a t" style="left:951.50px;top:324.60px;font-size:9.800px;color:#fff;font-weight:bold;">4</div>
<div class="a t" style="left:967.40px;top:325.21px;font-size:9.083px;color:#1a1a1a;font-weight:normal;transform:scaleX(0.9259);transform-origin:0 0;-webkit-text-stroke:.12px currentColor;">Remove</div>
<div class="a" style="left:934.50px;top:389.00px;width:19.6px;height:19.4px;border-radius:7.5px;background:linear-gradient(#1584ff,#0677f8);box-shadow:1.2px 1.5px 2px rgba(0,0,0,.42)"></div>
<div class="a t" style="left:941.50px;top:393.90px;font-size:9.800px;color:#fff;font-weight:bold;">5</div>
<div class="a t" style="left:957.00px;top:394.11px;font-size:9.558px;color:#1a1a1a;font-weight:normal;transform:scaleX(0.9259);transform-origin:0 0;-webkit-text-stroke:.12px currentColor;">Moving in the list</div>
<div class="a" style="left:563.90px;top:420.90px;width:19.6px;height:19.4px;border-radius:7.5px;background:linear-gradient(#1584ff,#0677f8);box-shadow:1.2px 1.5px 2px rgba(0,0,0,.42)"></div>
<div class="a t" style="left:570.90px;top:425.80px;font-size:9.800px;color:#fff;font-weight:bold;">6</div>
<div class="a t" style="left:545.40px;top:425.70px;font-size:9.925px;color:#1a1a1a;font-weight:normal;transform:scaleX(0.9259);transform-origin:0 0;-webkit-text-stroke:.12px currentColor;">List</div>
<div class="a" style="left:570.00px;top:528.80px;width:19.6px;height:19.4px;border-radius:7.5px;background:linear-gradient(#1584ff,#0677f8);box-shadow:1.2px 1.5px 2px rgba(0,0,0,.42)"></div>
<div class="a t" style="left:577.00px;top:533.70px;font-size:9.800px;color:#fff;font-weight:bold;">7</div>
<div class="a t" style="left:535.80px;top:534.17px;font-size:9.256px;color:#1a1a1a;font-weight:normal;transform:scaleX(0.9259);transform-origin:0 0;-webkit-text-stroke:.12px currentColor;">Restore</div>
<div class="a" style="left:411.40px;top:572.90px;width:19.6px;height:19.4px;border-radius:7.5px;background:linear-gradient(#1584ff,#0677f8);box-shadow:1.2px 1.5px 2px rgba(0,0,0,.42)"></div>
<div class="a t" style="left:418.40px;top:577.80px;font-size:9.800px;color:#fff;font-weight:bold;">1</div>
<div class="a t" style="left:436.00px;top:571.95px;font-size:9.980px;color:#3d80f0;font-weight:bold;">Number of pixels</div>
<div class="a" style="left:442.80px;top:584.30px;width:114.90px;height:29.60px;background:#f0f0f0"></div>
<div class="a t" style="left:445.00px;top:585.75px;font-size:9.504px;color:#111;font-weight:normal;transform:scaleX(0.9259);transform-origin:0 0;-webkit-text-stroke:.12px currentColor;">Width</div>
<div class="a t" style="left:505.80px;top:585.75px;font-size:9.504px;color:#111;font-weight:normal;transform:scaleX(0.9259);transform-origin:0 0;-webkit-text-stroke:.12px currentColor;">Height</div>
<div class="a" style="left:445.00px;top:595.00px;width:45.00px;height:18.40px;background:#fff;border:1px solid #3a8ee6"></div>
<div class="a" style="left:447.50px;top:598.10px;width:14.20px;height:10.40px;background:#0a64c8"></div>
<div class="a t" style="left:447.60px;top:599.42px;font-size:9.072px;color:#fff;font-weight:normal;transform:scaleX(0.9259);transform-origin:0 0;-webkit-text-stroke:.12px currentColor;">640</div>
<div class="a" style="left:478.30px;top:597.50px;width:8.60px;height:6.50px;background:#e8e8e8;border:1px solid #9a9a9a"></div>
<div class="a" style="left:478.30px;top:604.00px;width:8.60px;height:6.30px;background:#e8e8e8;border:1px solid #9a9a9a"></div>
<svg style="left:480.10px;top:599.30px" width="5" height="3" viewBox="0 0 5 3"><path d="M0 3 L2.5 0 L5 3Z" fill="#111"/></svg>
<svg style="left:480.10px;top:605.80px" width="5" height="3" viewBox="0 0 5 3"><path d="M0 0 L2.5 3 L5 0Z" fill="#111"/></svg>
<div class="a t" style="left:494.00px;top:600.14px;font-size:9.288px;color:#222;font-weight:normal;transform:scaleX(0.9259);transform-origin:0 0;-webkit-text-stroke:0">x</div>
<div class="a" style="left:505.30px;top:595.00px;width:50.60px;height:18.40px;background:#fff;border:1px solid #9a9a9a"></div>
<div class="a t" style="left:507.90px;top:599.42px;font-size:9.072px;color:#111;font-weight:normal;transform:scaleX(0.9259);transform-origin:0 0;-webkit-text-stroke:.12px currentColor;">575</div>
<div class="a" style="left:544.20px;top:597.50px;width:8.60px;height:6.50px;background:#e8e8e8;border:1px solid #9a9a9a"></div>
<div class="a" style="left:544.20px;top:604.00px;width:8.60px;height:6.30px;background:#e8e8e8;border:1px solid #9a9a9a"></div>
<svg style="left:546.00px;top:599.30px" width="5" height="3" viewBox="0 0 5 3"><path d="M0 3 L2.5 0 L5 3Z" fill="#111"/></svg>
<svg style="left:546.00px;top:605.80px" width="5" height="3" viewBox="0 0 5 3"><path d="M0 0 L2.5 3 L5 0Z" fill="#111"/></svg>
<div class="a t" style="left:442.80px;top:619.74px;font-size:10.822px;color:#1a1a1a;font-weight:normal;transform:scaleX(0.9259);transform-origin:0 0;-webkit-text-stroke:.12px currentColor;">Width and height of custom resolution in pixels.</div>
</body></html>
